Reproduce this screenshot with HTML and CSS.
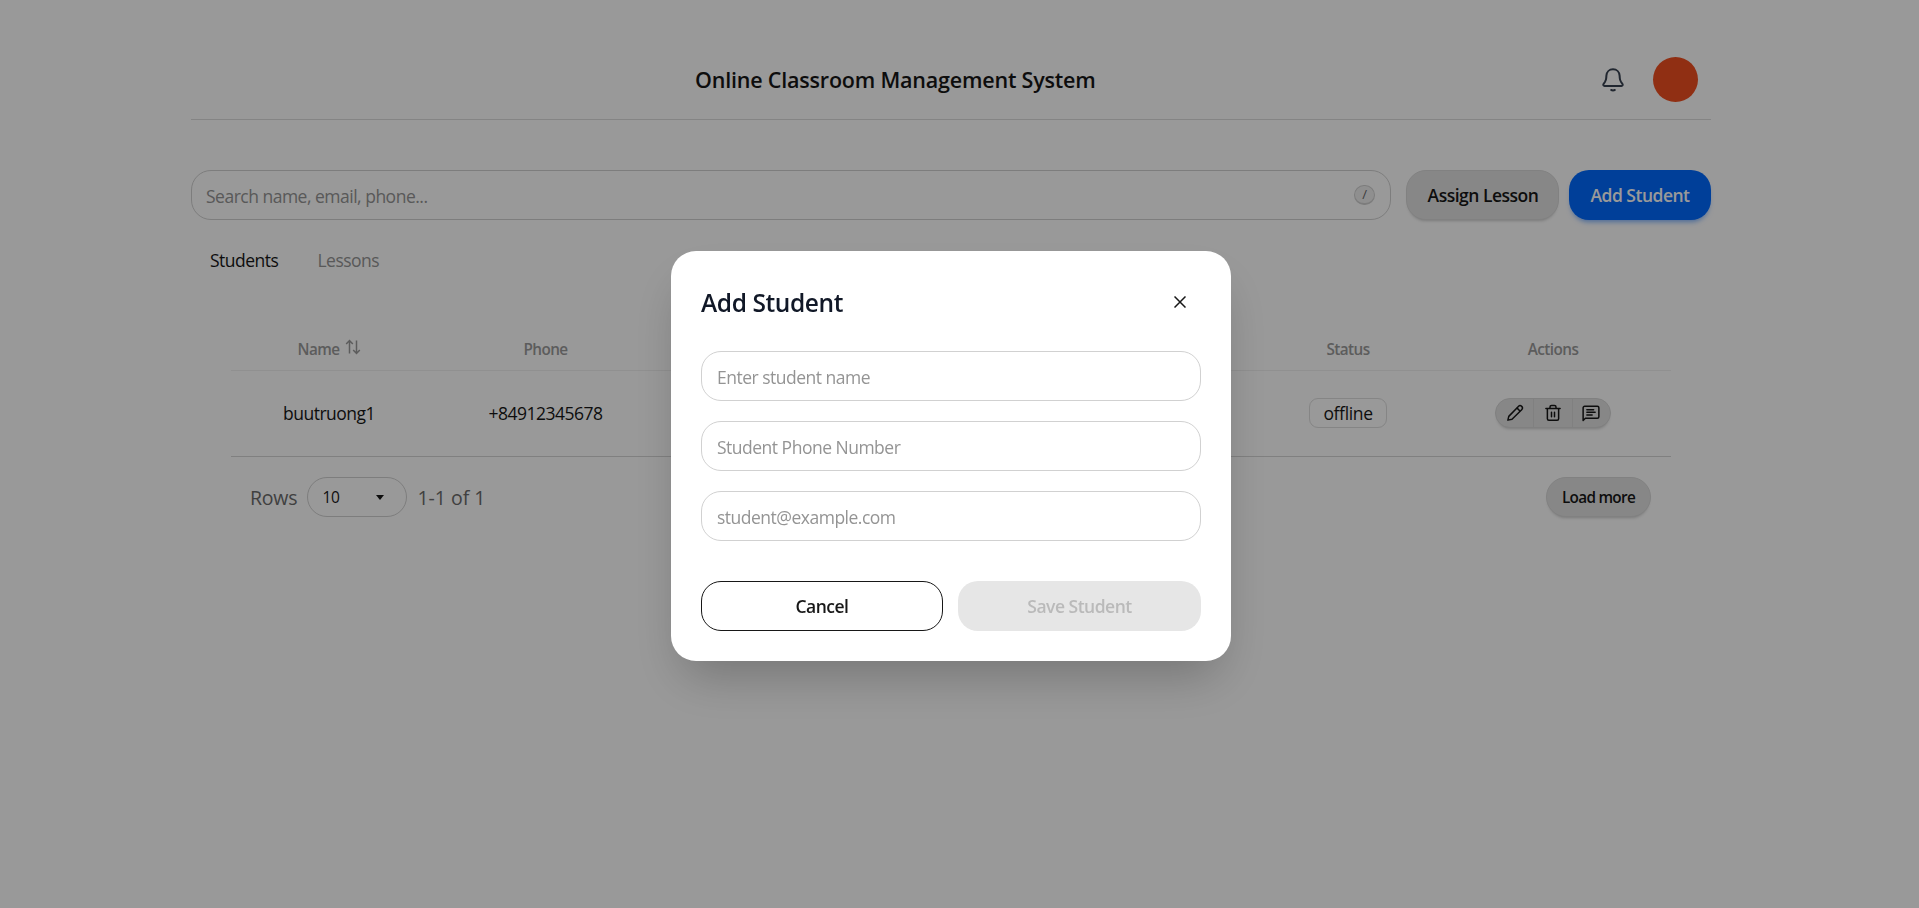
FILE: index.html
```html
<!DOCTYPE html>
<html lang="en">
<head>
<meta charset="utf-8">
<title>Online Classroom Management System</title>
<link rel="stylesheet" href="styles.css">
</head>
<body>
<div class="page">
  <header class="header">
    <h1 class="brand">Online Classroom Management System</h1>
    <div class="header-tools">
      <svg class="bell" viewBox="0 0 24 24" fill="none" stroke="currentColor" stroke-width="2" stroke-linecap="round" stroke-linejoin="round"><path d="M12 1.300C8.200 1.300 5.600 4 5.400 7.600l-.2 2.600c-.1 1.500-.5 2.500-1.300 3.800L2.500 16c-.6 1.100 0 1.900 1 1.900h17c1 0 1.600-.8 1-1.900L20.100 14c-.8-1.300-1.200-2.300-1.300-3.800l-.2-2.600C18.400 4 15.800 1.300 12 1.300z"/><path d="M10.200 22a3.200 2 0 0 0 3.600 0"/></svg>
      <div class="avatar"></div>
    </div>
  </header>
  <div class="toolbar">
    <div class="search"><span>Search name, email, phone...</span><kbd class="kbd">/</kbd></div>
    <button class="btn btn-neutral assign">Assign Lesson</button>
    <button class="btn btn-primary">Add Student</button>
  </div>
  <nav class="tabs"><a class="tab active">Students</a><a class="tab">Lessons</a></nav>
  <main class="panel">
    <div class="row head">
      <div class="cell name-head">Name<svg class="sort" viewBox="0 0 16 16" fill="none" stroke="currentColor" stroke-width="1.500"><path d="M4.500 14.500V1.500M1.200 5l3.300-3.500L7.800 5M11.500 1.500v13M8.200 11l3.300 3.500 3.300-3.500"/></svg></div>
      <div class="cell">Phone</div>
      <div class="cell"></div>
      <div class="cell">Status</div>
      <div class="cell">Actions</div>
    </div>
    <div class="row body-row">
      <div class="cell">buutruong1</div>
      <div class="cell">+84912345678</div>
      <div class="cell"></div>
      <div class="cell"><span class="badge">offline</span></div>
      <div class="cell">
        <div class="actions">
          <button><svg viewBox="0 0 24 24" fill="none" stroke="currentColor" stroke-width="2" stroke-linejoin="round" stroke-linecap="round"><path d="M2.500 21.500l1.200-5L16.500 3.200a2.800 2.800 0 0 1 4.400 4.400L8 20.400zM14.500 5.200l4.400 4.400"/></svg></button>
          <button><svg viewBox="0 0 24 24" fill="none" stroke="currentColor" stroke-width="2" stroke-linejoin="round" stroke-linecap="round"><path d="M2.500 6h19M4.500 6v13.500a2 2 0 0 0 2 2h11a2 2 0 0 0 2-2V6M8 6V4a2 2 0 0 1 2-2h4a2 2 0 0 1 2 2v2M10 11v6M14 11v6"/></svg></button>
          <button><svg viewBox="0 0 24 24" fill="none" stroke="currentColor" stroke-width="2" stroke-linejoin="round" stroke-linecap="round"><path d="M1.500 22V5a2 2 0 0 1 2-2h17a2 2 0 0 1 2 2v12a2 2 0 0 1-2 2H4.500zM6.500 7.500h9M6.500 11h11M6.500 14.500h7"/></svg></button>
        </div>
      </div>
    </div>
    <div class="footer">
      <div class="pager"><span>Rows</span><div class="select"><span>10</span><i class="caret"></i></div><span class="range">1-1 of 1</span></div>
      <button class="btn btn-neutral more">Load more</button>
    </div>
  </main>
</div>
<div class="overlay">
  <section class="modal">
    <div class="modal-head"><h2>Add Student</h2><button class="close"><svg viewBox="0 0 12 12" fill="none" stroke="currentColor" stroke-width="1.500"><path d="M.5.500l11 11M11.500.500l-11 11"/></svg></button></div>
    <div class="fields">
      <div class="field">Enter student name</div>
      <div class="field">Student Phone Number</div>
      <div class="field">student@example.com</div>
    </div>
    <div class="modal-actions"><button class="btn cancel">Cancel</button><button class="btn save">Save Student</button></div>
  </section>
</div>
</body>
</html>
```
FILE: styles.css
```css
* { box-sizing: border-box; }
body { margin: 0; background: #fff; color: #171717; font: 17.500px/24px "Open Sans", "Noto Sans", sans-serif; letter-spacing: -.5px; height: 908px; overflow: hidden; }
h1, h2 { margin: 0; font-weight: 600; }
button { font: inherit; color: inherit; letter-spacing: inherit; border: 0; background: none; padding: 0; }
svg { display: block; }
.page { width: 1520px; margin-left: 191px; padding-top: 40px; }
.header { height: 80px; border-bottom: 1px solid #dcdcdc; display: flex; align-items: center; justify-content: space-between; padding: 0 13px 0 504px; }
.brand { font-size: 21.500px; letter-spacing: -.2px; padding-top: 1px; }
.header-tools { display: flex; align-items: center; gap: 28px; }
.bell { width: 24px; height: 24px; color: #374151; }
.avatar { width: 45px; height: 45px; border-radius: 50%; background: #f04f21; }
.toolbar { display: flex; margin-top: 50px; gap: 10px; }
.search { width: 1200px; height: 50px; border: 1px solid #d1d1d1; border-radius: 20px; display: flex; align-items: center; justify-content: space-between; padding: 0 15px 0 14px; color: #949494; margin-right: 5px; }
.search span { padding-top: 2px; }
.kbd { width: 21px; height: 20px; border: 1px solid #cfcfcf; border-bottom-width: 2px; border-radius: 10px; background: #efefef; font: 13px/16px "Open Sans", sans-serif; text-align: center; color: #666; }
.btn { height: 50px; border-radius: 20px; font-weight: 600; display: flex; align-items: center; justify-content: center; }
.btn-neutral { background: #e2e2e2; border: 1px solid #d8d8d8; box-shadow: 0 3px 3px -2px #ccc; }
.assign { width: 153px; padding-left: 1px; }
.btn-primary { width: 142px; background: #0069ff; color: #fff; box-shadow: 0 4px 5px -2px #0069ff80; }
.tabs { display: flex; gap: 39px; height: 80px; padding: 0 19px; align-items: center; }
.tab { color: #949494; }
.tab.active { color: #171717; }
.panel { margin: 20px 40px 0; }
.row { display: grid; grid-template-columns: 196px 237px 597px 174px 236px; border-bottom: 1px solid #d6d6d6; }
.cell { display: flex; align-items: center; justify-content: center; }
.head { height: 51px; padding-top: 7px; font-size: 15.300px; letter-spacing: -.55px; font-weight: 600; color: #9a9a9a; border-color: #f0f0f0; }
.body-row { height: 86px; padding-bottom: 1px; }
.name-head { gap: 5px; }
.sort { width: 16px; height: 16px; margin-bottom: 3px; }
.badge { width: 78px; height: 30px; border: 1px solid #dedede; border-radius: 9px; display: flex; align-items: center; justify-content: center; letter-spacing: -.35px; }
.actions { display: flex; width: 116px; height: 30px; border: 1px solid #d5d5d5; border-radius: 15px; background: #e2e2e2; box-shadow: 0 3px 3px -2px #ccc; }
.actions button { flex: 1; display: flex; align-items: center; justify-content: center; border-left: 1px solid #d5d5d5; }
.actions button:first-child { border-left: 0; }
.actions svg { width: 18px; height: 18px; }
.footer { display: flex; justify-content: space-between; align-items: center; padding: 20px 20px 0 19px; }
.pager { display: flex; align-items: center; gap: 10px; font-size: 19.500px; letter-spacing: -.2px; color: #6b6b6b; }
.pager > span { padding-top: 2px; }
.range { letter-spacing: 0; }
.select { width: 100px; height: 40px; border: 1px solid #d1d1d1; border-radius: 20px; display: flex; align-items: center; justify-content: space-between; padding: 0 22px 0 14px; font-size: 15.500px; color: #171717; }
.caret { border: 4px solid transparent; border-top: 5px solid #171717; border-bottom: 0; }
.more { width: 105px; height: 40px; font-size: 15.300px; letter-spacing: -.7px; }
.overlay { position: fixed; inset: 0; background: rgba(0,0,0,.4); display: flex; align-items: center; justify-content: center; padding: 4px 17px 0 0; }
.modal { width: 560px; height: 410px; border-radius: 25px; background: #fff; padding: 30px; box-shadow: 0 25px 50px -12px rgba(0,0,0,.25); }
.modal-head { display: flex; align-items: center; justify-content: space-between; height: 42px; }
.modal-head h2 { font-size: 24.500px; letter-spacing: -.4px; color: #111827; padding-top: 2px; }
.close { width: 42px; height: 40px; display: flex; align-items: center; justify-content: center; }
.close svg { width: 12px; height: 12px; }
.fields { display: flex; flex-direction: column; gap: 20px; margin-top: 28px; }
.field { height: 50px; border: 1px solid #d1d1d1; border-radius: 20px; display: flex; align-items: center; padding: 2px 15px 0; color: #949494; }
.modal-actions { display: grid; grid-template-columns: 242px 243px; gap: 15px; margin-top: 40px; }
.cancel { border: 1px solid #171717; }
.save { background: #e6e6e6; color: #bababa; }
```
